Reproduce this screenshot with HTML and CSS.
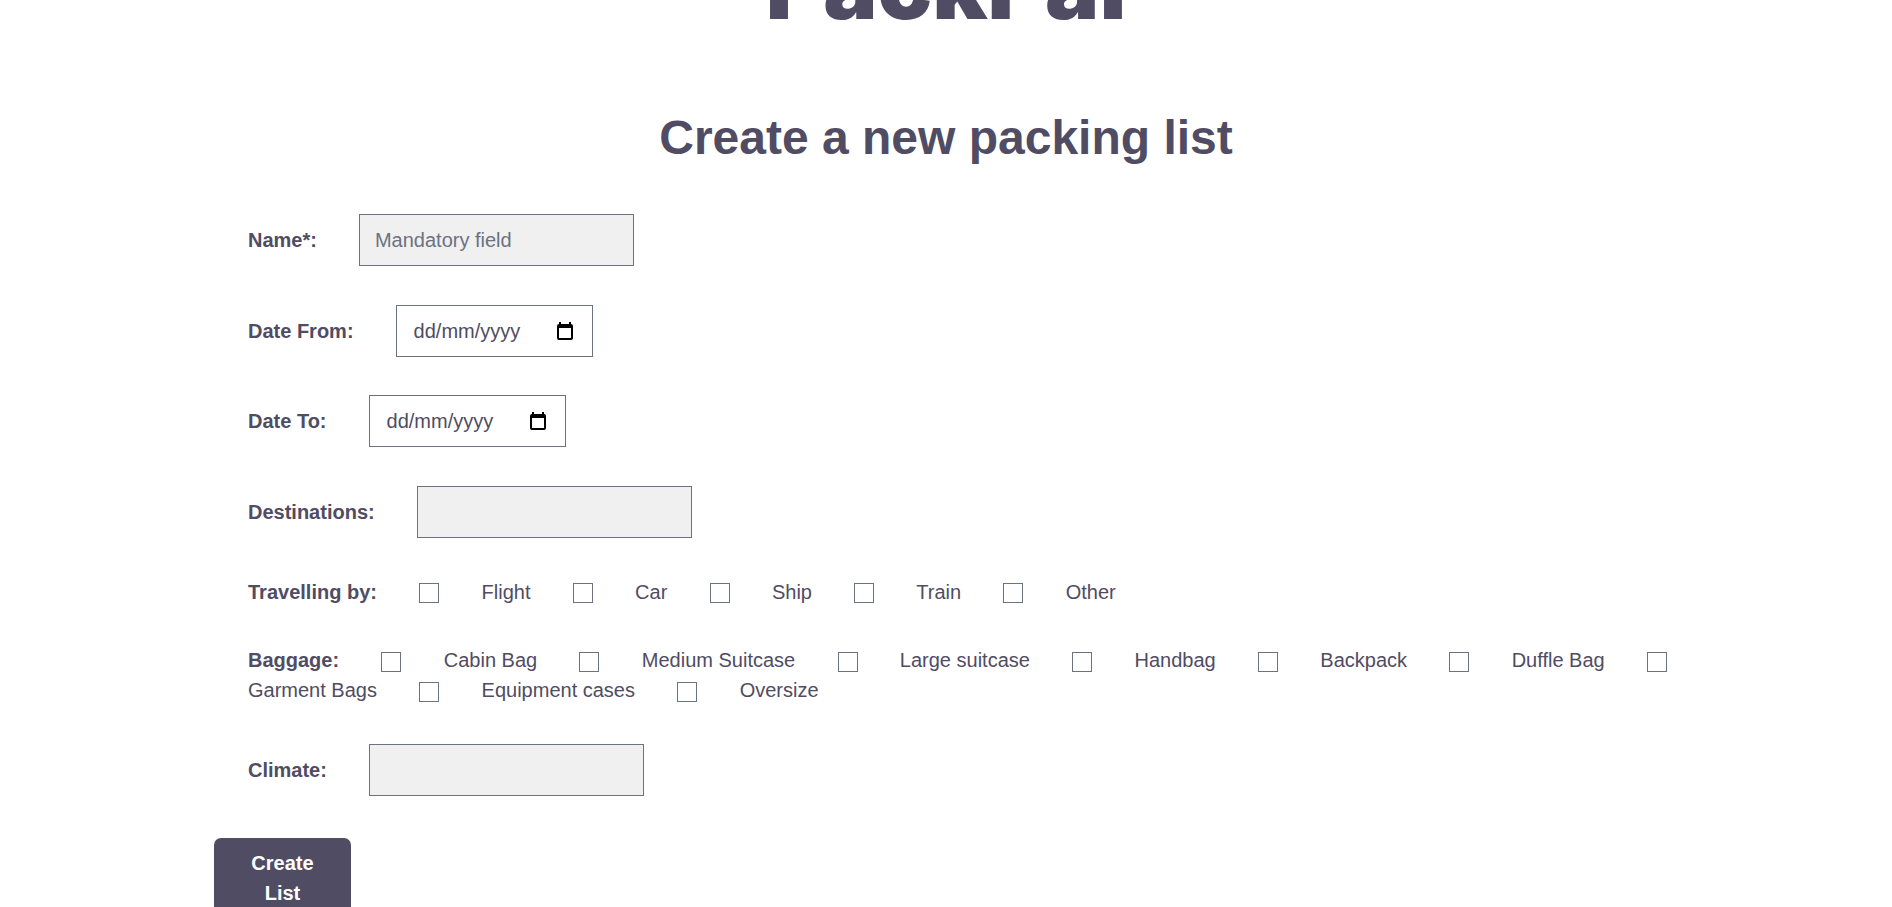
FILE: index.html
```html
<!DOCTYPE html>
<html lang="en-GB">
<head>
<meta charset="utf-8">
<title>PackPal</title>
<link rel="stylesheet" href="styles.css">
</head>
<body>
<header class="brand">PackPal</header>
<main>
<h1 class="title">Create a new packing list</h1>
<form class="form">
  <div class="row single"><label class="name" for="name">Name*:</label><input class="field" id="name" type="text" placeholder="Mandatory field"></div>
  <div class="row single">
    <label class="name" for="from">Date From:</label>
    <div class="field date">
      <input class="date-text" id="from" type="text" placeholder="dd/mm/yyyy">
      <button class="picker" type="button" aria-label="Open calendar"><svg width="16" height="18" viewBox="0 0 16 18"><path fill="#000" fill-rule="evenodd" d="M2 0h2v2h8V0h2v2q2 0 2 2v12q0 2-2 2H2q-2 0-2-2V4q0-2 2-2zM2 6v10h12V6z"/></svg></button>
    </div>
  </div>
  <div class="row single">
    <label class="name" for="to">Date To:</label>
    <div class="field date">
      <input class="date-text" id="to" type="text" placeholder="dd/mm/yyyy">
      <button class="picker" type="button" aria-label="Open calendar"><svg width="16" height="18" viewBox="0 0 16 18"><path fill="#000" fill-rule="evenodd" d="M2 0h2v2h8V0h2v2q2 0 2 2v12q0 2-2 2H2q-2 0-2-2V4q0-2 2-2zM2 6v10h12V6z"/></svg></button>
    </div>
  </div>
  <div class="row single"><label class="name" for="dest">Destinations:</label><input class="field" id="dest" type="text"></div>
  <div class="row" role="group" aria-labelledby="travel">
    <span class="name" id="travel">Travelling by:</span>
    <input class="check" type="checkbox" id="flight"> <label for="flight">Flight</label>
    <input class="check" type="checkbox" id="car"> <label for="car">Car</label>
    <input class="check" type="checkbox" id="ship"> <label for="ship">Ship</label>
    <input class="check" type="checkbox" id="train"> <label for="train">Train</label>
    <input class="check" type="checkbox" id="other"> <label for="other">Other</label>
  </div>
  <div class="row" role="group" aria-labelledby="baggage">
    <span class="name" id="baggage">Baggage:</span>
    <input class="check" type="checkbox" id="cabin"> <label for="cabin">Cabin Bag</label>
    <input class="check" type="checkbox" id="medium"> <label for="medium">Medium Suitcase</label>
    <input class="check" type="checkbox" id="large"> <label for="large">Large suitcase</label>
    <input class="check" type="checkbox" id="handbag"> <label for="handbag">Handbag</label>
    <input class="check" type="checkbox" id="backpack"> <label for="backpack">Backpack</label>
    <input class="check" type="checkbox" id="duffle"> <label for="duffle">Duffle Bag</label>
    <input class="check" type="checkbox" id="garment"> <label for="garment">Garment Bags</label>
    <input class="check" type="checkbox" id="equipment"> <label for="equipment">Equipment cases</label>
    <input class="check" type="checkbox" id="oversize"> <label for="oversize">Oversize</label>
  </div>
  <div class="row single"><label class="name" for="climate">Climate:</label><input class="field" id="climate" type="text"></div>
  <button class="submit" type="submit">Create List</button>
</form>
</main>
</body>
</html>
```
FILE: styles.css
```css
* { box-sizing: border-box; }
html { height: 100%; overflow: hidden; }
body {
  margin: 0;
  height: 100%;
  overflow: hidden;
  background: #fff;
  color: #504c63;
  font: 20px/30px "Liberation Sans", Arial, sans-serif;
}
.brand {
  margin-top: -80px;
  text-align: center;
  font: 900 91px/132px Inter, sans-serif;
}
.title {
  margin: 48px 0 39px;
  text-align: center;
  font-size: 48px;
  line-height: 75px;
}
.form { padding: 0 131px 0 214px; }
.row { margin: 0 43px 2.5% 34px; }
.single { display: flex; align-items: center; gap: 42px; }
.name { font-weight: 700; }
.field {
  width: 275px;
  height: 52px;
  padding: 10px 15px;
  border: 1px solid #6b7280;
  border-radius: 0;
  background: #f0f0f0;
  color: inherit;
  font: inherit;
}
.field::placeholder { color: #6b7280; opacity: 1; }
.date {
  display: flex;
  align-items: center;
  width: 197px;
  padding: 10px 19px 10px 17px;
  background: #fff;
}
.date-text {
  flex: 1;
  min-width: 0;
  padding: 0;
  border: 0;
  background: none;
  color: inherit;
  font: inherit;
}
.date-text::placeholder { color: #504c63; opacity: 1; }
.picker {
  display: flex;
  padding: 0;
  border: 0;
  background: none;
}
.check {
  appearance: none;
  width: 20px;
  height: 20px;
  margin: 0 2.5%;
  border: 1px solid #6b7280;
  background: #fff;
  vertical-align: middle;
}
.submit {
  width: 137px;
  margin-top: 3px;
  padding: 10px 30px;
  border: 0;
  border-radius: 7px;
  background: #504c63;
  color: #fff;
  font: inherit;
  font-weight: 700;
}
```
